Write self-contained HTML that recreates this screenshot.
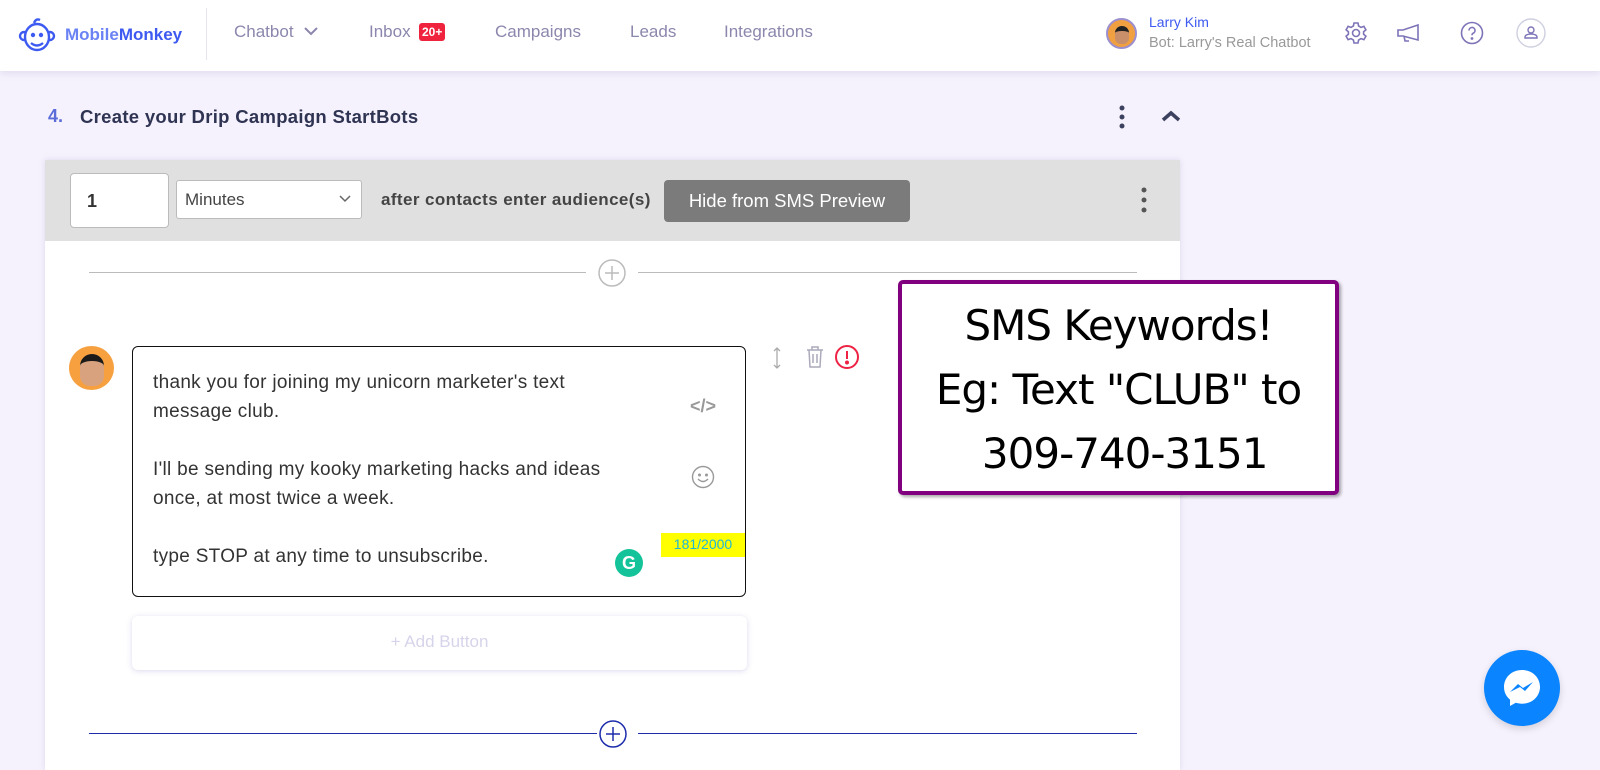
<!DOCTYPE html>
<html><head><meta charset="utf-8"><style>
*{box-sizing:border-box;margin:0;padding:0}
body{width:1600px;height:761px;overflow:hidden;background:#f6f2fd;font-family:"Liberation Sans",Roboto,sans-serif;position:relative}
.nav{position:absolute;left:0;top:0;width:1600px;height:71px;background:#fff;box-shadow:0 2px 8px rgba(120,110,170,.18)}
.a{position:absolute}
.navtxt{font-size:17px;color:#8b87ad;top:22px}
</style></head><body>
<div class="nav">
 <svg class="a" style="left:18px;top:17px" width="38" height="38" viewBox="0 0 38 38" fill="none" stroke="#3d5af1" stroke-width="2.4"><circle cx="6" cy="19" r="4"/><circle cx="32" cy="19" r="4"/><ellipse cx="19" cy="20" rx="12" ry="13" fill="#fff"/><path d="M13 26q6 5 12 0"/><circle cx="15" cy="18" r="1" fill="#3d5af1"/><circle cx="23" cy="18" r="1" fill="#3d5af1"/><path d="M16 6q2-5 6-3" /></svg>
 <div class="a" style="left:65px;top:25px;font-size:17px;font-weight:bold;color:#3d5af1"><span style="color:#6b82f5">Mobile</span>Monkey</div>
 <div class="a" style="left:206px;top:8px;width:1px;height:52px;background:#e5e5ee"></div>
 <div class="a navtxt" style="left:234px">Chatbot <svg width="18" height="12" viewBox="0 0 18 12" style="margin-left:4px"><path d="M3 3l6 6 6-6" stroke="#8b87ad" stroke-width="2" fill="none"/></svg></div>
 <div class="a navtxt" style="left:369px">Inbox</div>
 <div class="a" style="left:419px;top:23px;background:#f0233f;color:#fff;font-size:12px;font-weight:bold;padding:2px 3px;border-radius:3px">20+</div>
 <div class="a navtxt" style="left:495px">Campaigns</div>
 <div class="a navtxt" style="left:630px">Leads</div>
 <div class="a navtxt" style="left:724px">Integrations</div>
 <div class="a" style="left:1106px;top:18px;width:31px;height:31px;border-radius:50%;background:#f0a040;border:2px solid #9c8fd0"><div style="margin:6px auto 0;width:14px;height:18px;border-radius:7px 7px 6px 6px;background:#c98f6a;border-top:5px solid #222"></div></div>
 <div class="a" style="left:1149px;top:14px;font-size:14px;color:#3d5af1">Larry Kim</div>
 <div class="a" style="left:1149px;top:35px;font-size:14.5px;color:#999">Bot: Larry's Real Chatbot</div>
 <svg class="a" style="left:1344px;top:21px" width="24" height="24" viewBox="0 0 24 24" fill="none" stroke="#7d74b8" stroke-width="1.6"><circle cx="12" cy="12" r="3.5"/><path d="M10 2h4l.6 3 2.4 1.4 2.9-1 2 3.4-2.3 2v2.4l2.3 2-2 3.4-2.9-1L14.6 19 14 22h-4l-.6-3L7 17.6l-2.9 1-2-3.4 2.3-2v-2.4l-2.3-2 2-3.4 2.9 1L9.4 5z"/></svg>
 <svg class="a" style="left:1396px;top:22px" width="26" height="22" viewBox="0 0 26 22" fill="none" stroke="#7d74b8" stroke-width="1.6"><path d="M2 8h5l15-5v15L7 14H2z"/><path d="M8 14l1 5h4"/></svg>
 <svg class="a" style="left:1460px;top:21px" width="24" height="24" viewBox="0 0 24 24" fill="none" stroke="#7d74b8" stroke-width="1.6"><circle cx="12" cy="12" r="10.5"/><path d="M9 9.5a3 3 0 1 1 4 2.8c-.8.4-1 1-1 2"/><circle cx="12" cy="17.5" r=".6" fill="#7d74b8"/></svg>
 <svg class="a" style="left:1516px;top:18px" width="30" height="30" viewBox="0 0 30 30" fill="none" stroke="#7d74b8" stroke-width="1.4"><circle cx="15" cy="15" r="14" stroke="#cfd0e0"/><circle cx="15" cy="12" r="3"/><path d="M9 20h12v-1c0-2-3-3-6-3s-6 1-6 3z"/></svg>
</div>
<div class="a" style="left:48px;top:106px;font-size:18px;font-weight:bold;color:#5b6bd8">4.</div>
<div class="a" style="left:80px;top:106px;font-size:18.5px;font-weight:bold;color:#2f3453;letter-spacing:.3px">Create your Drip Campaign StartBots</div>
<svg class="a" style="left:1115px;top:104px" width="14" height="26"><circle cx="7" cy="4" r="2.5" fill="#3d4160"/><circle cx="7" cy="13" r="2.5" fill="#3d4160"/><circle cx="7" cy="22" r="2.5" fill="#3d4160"/></svg>
<svg class="a" style="left:1160px;top:108px" width="22" height="16"><path d="M3 12l8-7 8 7" stroke="#3d4160" stroke-width="3.5" fill="none"/></svg>

<div class="a" style="left:45px;top:160px;width:1135px;height:610px;background:#fff;box-shadow:0 0 6px rgba(150,140,190,.25)"></div>
<div class="a" style="left:45px;top:160px;width:1135px;height:81px;background:#e0e0e0"></div>
<div class="a" style="left:70px;top:173px;width:99px;height:55px;background:#fff;border:1px solid #bbb;border-radius:4px;font-size:18px;font-weight:bold;padding:17px 0 0 16px;color:#333">1</div>
<div class="a" style="left:176px;top:180px;width:186px;height:39px;background:#fff;border:1px solid #bbb;border-radius:3px;font-size:17px;padding:9px 0 0 8px;color:#444">Minutes<svg style="position:absolute;right:10px;top:14px" width="12" height="9"><path d="M1 1l5 5 5-5" stroke="#666" stroke-width="1.5" fill="none"/></svg></div>
<div class="a" style="left:381px;top:190px;font-size:17px;font-weight:bold;color:#444;letter-spacing:.4px">after contacts enter audience(s)</div>
<div class="a" style="left:664px;top:180px;width:246px;height:42px;background:#7b7b7b;border-radius:4px;color:#fff;font-size:18.5px;text-align:center;padding-top:10px">Hide from SMS Preview</div>
<svg class="a" style="left:1138px;top:186px" width="12" height="28"><circle cx="6" cy="4" r="2.5" fill="#555"/><circle cx="6" cy="14" r="2.5" fill="#555"/><circle cx="6" cy="24" r="2.5" fill="#555"/></svg>

<div class="a" style="left:89px;top:272px;width:497px;height:1px;background:#bbb"></div>
<div class="a" style="left:638px;top:272px;width:499px;height:1px;background:#bbb"></div>
<svg class="a" style="left:597px;top:258px" width="30" height="30" fill="none" stroke="#bbb" stroke-width="1.5"><circle cx="15" cy="15" r="13"/><path d="M15 8v14M8 15h14"/></svg>

<div class="a" style="left:69px;top:346px;width:45px;height:44px;border-radius:50%;background:#f6a040;overflow:hidden"><div style="margin:8px auto 0;width:24px;height:32px;border-radius:12px 12px 10px 10px;background:#d9a27e;border-top:7px solid #1a1a1a"></div></div>
<div class="a" style="left:132px;top:346px;width:614px;height:251px;border:1.5px solid #111;border-radius:6px;background:#fff"></div>
<div class="a" style="left:153px;top:368px;font-size:19px;letter-spacing:.3px;line-height:29px;color:#333">thank you for joining my unicorn marketer's text<br>message club.<br><br>I'll be sending my kooky marketing hacks and ideas<br>once, at most twice a week.<br><br>type STOP at any time to unsubscribe.</div>
<div class="a" style="left:690px;top:396px;font-size:18px;font-weight:bold;color:#999">&lt;/&gt;</div>
<svg class="a" style="left:691px;top:465px" width="24" height="24" fill="none" stroke="#999" stroke-width="1.4"><circle cx="12" cy="12" r="10.5"/><circle cx="8.5" cy="10" r=".8" fill="#999"/><circle cx="15.5" cy="10" r=".8" fill="#999"/><path d="M7 14q5 5 10 0"/></svg>
<div class="a" style="left:661px;top:533px;width:84px;height:24px;background:#ffff00;color:#1fb8d8;font-size:14px;text-align:center;padding-top:3px">181/2000</div>
<div class="a" style="left:615px;top:549px;width:28px;height:28px;border-radius:50%;background:#15c39a;color:#fff;font-weight:bold;font-size:18px;text-align:center;line-height:28px">G</div>
<svg class="a" style="left:770px;top:346px" width="14" height="24" fill="none" stroke="#aaa" stroke-width="1.3"><path d="M7 2v20M4 5l3-3 3 3M4 19l3 3 3-3"/></svg>
<svg class="a" style="left:805px;top:345px" width="20" height="24" fill="none" stroke="#aab" stroke-width="1.5"><path d="M2 5h16M7 5V2h6v3M4 5l1 17h10l1-17M8 9v9M12 9v9"/></svg>
<svg class="a" style="left:834px;top:344px" width="26" height="26" fill="none" stroke="#ee2244" stroke-width="2"><circle cx="13" cy="13" r="11"/><path d="M13 7v8"/><circle cx="13" cy="18.5" r="1" fill="#ee2244"/></svg>

<div class="a" style="left:132px;top:616px;width:615px;height:54px;background:#fff;border-radius:6px;box-shadow:0 1px 6px rgba(140,130,200,.3);text-align:center;font-size:17px;color:#d6d4ea;padding-top:16px">+ Add Button</div>

<div class="a" style="left:89px;top:733px;width:508px;height:1px;background:#1d2cab"></div>
<div class="a" style="left:638px;top:733px;width:499px;height:1px;background:#1d2cab"></div>
<svg class="a" style="left:598px;top:719px" width="30" height="30" fill="none" stroke="#1d2cab" stroke-width="1.5"><circle cx="15" cy="15" r="13"/><path d="M15 8v14M8 15h14"/></svg>

<div class="a" style="left:898px;top:280px;width:441px;height:215px;border:4px solid #800080;border-radius:5px;background:#fff;box-shadow:2px 2px 3px rgba(0,0,0,.35);text-align:center;font-family:'DejaVu Sans','Liberation Sans',sans-serif;font-size:42px;line-height:64px;color:#000;padding-top:10px;letter-spacing:-1px">SMS Keywords!<br>Eg: Text "CLUB" to<br>&nbsp;309-740-3151</div>

<div class="a" style="left:1484px;top:650px;width:76px;height:76px;border-radius:50%;background:#0a84ff;box-shadow:0 3px 8px rgba(0,0,0,.15)"></div>
<svg class="a" style="left:1496px;top:662px" width="52" height="52" viewBox="0 0 52 52"><path d="M26 8C15.5 8 8 15.5 8 25c0 5.2 2.3 9.6 6 12.6V44l5.8-3.2c1.9.6 4 .9 6.2.9 10.5 0 18-7.5 18-16.8S36.5 8 26 8z" fill="#fff"/><path d="M14 30l8-8 5 4 10-6-8 9-5-4z" fill="#0a84ff"/></svg>
</body></html>
